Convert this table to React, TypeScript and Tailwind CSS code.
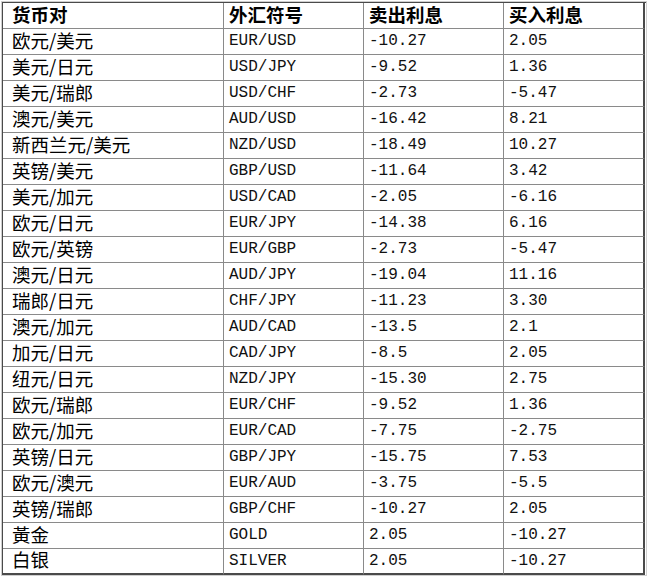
const rows: [string, string, string, string][] = [
  ['欧元/美元', 'EUR/USD', '-10.27', '2.05'],
  ['美元/日元', 'USD/JPY', '-9.52', '1.36'],
  ['美元/瑞郎', 'USD/CHF', '-2.73', '-5.47'],
  ['澳元/美元', 'AUD/USD', '-16.42', '8.21'],
  ['新西兰元/美元', 'NZD/USD', '-18.49', '10.27'],
  ['英镑/美元', 'GBP/USD', '-11.64', '3.42'],
  ['美元/加元', 'USD/CAD', '-2.05', '-6.16'],
  ['欧元/日元', 'EUR/JPY', '-14.38', '6.16'],
  ['欧元/英镑', 'EUR/GBP', '-2.73', '-5.47'],
  ['澳元/日元', 'AUD/JPY', '-19.04', '11.16'],
  ['瑞郎/日元', 'CHF/JPY', '-11.23', '3.30'],
  ['澳元/加元', 'AUD/CAD', '-13.5', '2.1'],
  ['加元/日元', 'CAD/JPY', '-8.5', '2.05'],
  ['纽元/日元', 'NZD/JPY', '-15.30', '2.75'],
  ['欧元/瑞郎', 'EUR/CHF', '-9.52', '1.36'],
  ['欧元/加元', 'EUR/CAD', '-7.75', '-2.75'],
  ['英镑/日元', 'GBP/JPY', '-15.75', '7.53'],
  ['欧元/澳元', 'EUR/AUD', '-3.75', '-5.5'],
  ['英镑/瑞郎', 'GBP/CHF', '-10.27', '2.05'],
  ['黃金', 'GOLD', '2.05', '-10.27'],
  ['白银', 'SILVER', '2.05', '-10.27'],
];

const cjk = "font-['Noto_Sans_CJK_SC',sans-serif] text-[18.5px] leading-none pb-[3px]";
const mono = "font-['Liberation_Mono','Noto_Sans_CJK_SC',monospace] text-[16px] leading-none pb-[1px] text-[#111]";

export default function App() {
  return (
    <div className="w-[647px] h-[577px] bg-white pt-px pl-px">
      <div className="w-[646px] border border-[#cfcfcf]">
        <div className="border-t border-l border-[#4a4a4a]">
          <div className="grid grid-cols-[221px_140px_140px_141px] text-black">
            {['货币对', '外汇符号', '卖出利息', '买入利息'].map((h, i) => (
              <div
                key={h}
                className={`h-[26px] flex items-center border-b border-[#8a8a8a] ${cjk} font-bold ${
                  i === 0 ? 'pl-[9px]' : 'pl-[5px]'
                } ${i === 3 ? 'border-r-2 border-r-[#4a4a4a]' : 'border-r'}`}
              >
                {h}
              </div>
            ))}
            {rows.map((r, ri) =>
              r.map((c, i) => (
                <div
                  key={ri + '-' + i}
                  className={`h-[26px] flex items-center ${i === 0 ? `${cjk} pl-[9px]` : `${mono} pl-[5px]`} ${
                    i === 3 ? 'border-r-2 border-r-[#4a4a4a]' : 'border-r border-r-[#8a8a8a]'
                  } ${ri === rows.length - 1 ? 'border-b-2 border-b-[#4a4a4a]' : 'border-b border-b-[#8a8a8a]'}`}
                >
                  {c}
                </div>
              ))
            )}
          </div>
        </div>
      </div>
    </div>
  );
}
